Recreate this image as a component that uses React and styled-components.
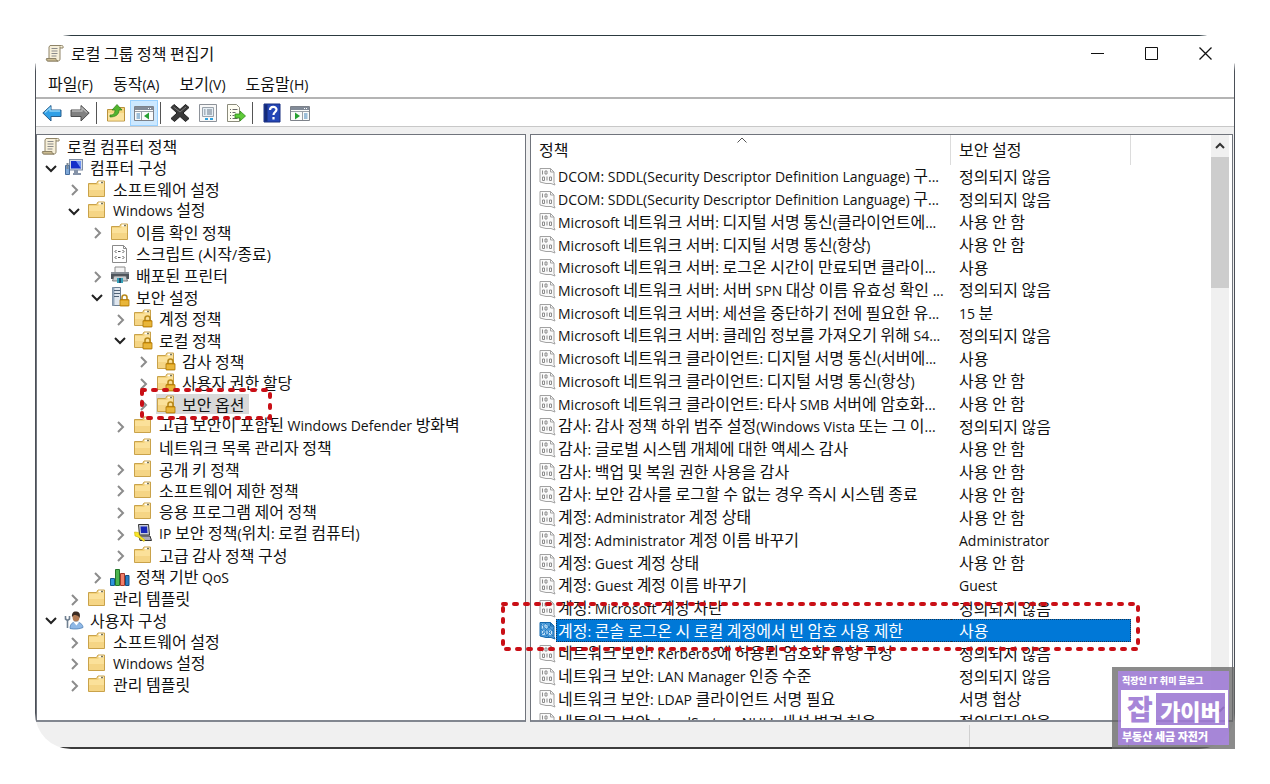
import React from "react";
import styled, { createGlobalStyle, css } from "styled-components";

const GlobalStyle = createGlobalStyle`
  * {
    box-sizing: border-box;
  }

  body {
    margin: 0;
    background: #fff;
    color: #111;
    font: 16px/20px "Noto Sans CJK KR", sans-serif;
  }

  button {
    border: 0;
    padding: 0;
    background: none;
    font: inherit;
    color: inherit;
  }
`;

const Page = styled.main`
  padding: 35px;
`;

const Stage = styled.div`
  position: relative;
`;

const Window = styled.div`
  border-radius: 36px;
  overflow: hidden;
`;

const Frame = styled.div`
  border: 1px solid #4a4f57;
  border-top-color: #2c3a40;
  border-bottom: 2px solid #3c3c3c;
  background: #fff;
`;

const Latin = styled.span`
  font-family: "Open Sans", "Noto Sans CJK KR", sans-serif;
  font-size: 14px;
`;

const TitleBar = styled.header`
  display: flex;
  align-items: center;
  height: 34px;
  padding: 0 2px 0 9px;

  h1 {
    flex: 1;
    margin: 0 0 0 6px;
    font-size: 16px;
    font-weight: 400;
  }
`;

const CaptionButton = styled.button`
  display: grid;
  place-items: center;
  width: 54px;
  height: 34px;
`;

const MenuBar = styled.nav`
  display: flex;
  align-items: center;
  gap: 20px;
  height: 27px;
  padding-left: 12px;
`;

const Toolbar = styled.div`
  display: flex;
  align-items: flex-end;
  height: 30px;
  padding-left: 2px;
  border-top: 2px solid #b4b4b4;
  border-bottom: 1px solid #c8c8c8;
`;

const ToolButton = styled.button`
  display: grid;
  place-items: center;
  width: 28px;
  height: 26px;
  border: 1px solid ${(p) => (p.$active ? "#99d1ff" : "transparent")};
  background: ${(p) => (p.$active ? "#cce8ff" : "none")};
`;

const ToolDivider = styled.span`
  width: 1px;
  height: 22px;
  margin: 0 ${(p) => p.$after}px 2px 2px;
  background: #555;
`;

const Workspace = styled.div`
  display: grid;
  grid-template-columns: 490px minmax(0, 1fr);
  gap: 4px;
  padding: 7px 1px 3px 0;
  background: #f0f0f0;
`;

const Pane = styled.section`
  height: 588px;
  border: 1px solid #70747c;
  border-bottom: 2px solid #828790;
  background: #fff;
  overflow: hidden;
`;

const Tree = styled.ul`
  display: flex;
  flex-direction: column;
  height: 560px;
  margin: 0;
  padding: 0 0 0 4px;
  list-style: none;
`;

const TreeRow = styled.li`
  display: flex;
  flex: 1;
  align-items: center;
  padding-left: ${(p) => Math.max(p.$depth - 1, 0) * 23}px;
  white-space: nowrap;
`;

const Toggle = styled.button`
  display: grid;
  place-items: center;
  width: 20px;
  height: 20px;
  padding-top: 3px;
  margin-right: 3px;
`;

const TreeItem = styled.span`
  display: flex;
  align-items: center;
  gap: 6px;
  padding-right: 5px;
  background: ${(p) => (p.$selected ? "#d9d9d9" : "none")};
`;

const ListPane = styled(Pane)`
  display: flex;
  justify-content: space-between;
`;

const PolicyTable = styled.table`
  width: 600px;
  height: 598px;
  border-spacing: 0;
  table-layout: fixed;
  white-space: nowrap;
`;

const HeadCell = styled.th`
  position: relative;
  height: 30px;
  padding: 0 0 2px 8px;
  border-right: 1px solid #dcdcdc;
  text-align: left;
  font-weight: 400;
`;

const SortMark = styled.svg`
  position: absolute;
  top: 2px;
  left: calc(50% - 4px);
`;

const Row = styled.tr`
  td {
    padding: 0 0 0 8px;
    border: 1px solid transparent;
    border-width: 1px 0;
    line-height: 19px;
  }

  td:first-child svg {
    display: block;
  }

  td:nth-child(2) {
    padding-left: 2px;
  }

  ${(p) =>
    p.$selected &&
    css`
      color: #fff;

      td:not(:first-child) {
        background: #0078d7;
        border-color: #17324d;
        border-style: dotted;
      }

      td:last-child {
        border-right-width: 1px;
      }

      td:nth-child(2) {
        border-left-width: 1px;
        padding-left: 1px;
      }
    `}
`;

const ScrollBar = styled.div`
  display: flex;
  flex-direction: column;
  align-items: center;
  width: 18px;
  margin-right: 3px;
  background: #f0f0f0;
`;

const ScrollButton = styled.button`
  display: grid;
  place-items: center;
  width: 18px;
  height: 22px;
`;

const Thumb = styled.div`
  width: 18px;
  height: 131px;
  margin-bottom: auto;
  background: #cdcdcd;
`;

const StatusBar = styled.footer`
  display: grid;
  grid-template-columns: minmax(0, 1fr) 159px 105px;
  height: 22px;
  background: #f0f0f0;

  span {
    border-right: 1px solid #d0d0d0;
  }
`;

const Callout = styled.svg`
  position: absolute;
  left: ${(p) => p.$left}px;
  top: ${(p) => p.$top}px;
  width: ${(p) => p.$width};
  height: ${(p) => p.$height}px;
  overflow: visible;
  pointer-events: none;

  rect {
    width: 100%;
    height: 100%;
    fill: none;
    stroke: #c90f16;
    stroke-width: 4;
    stroke-linecap: round;
    stroke-dasharray: 3 8;
  }
`;

const Badge = styled.aside`
  position: absolute;
  right: 0;
  bottom: 0;
  width: 123px;
  border: 6px solid rgba(100, 100, 100, 0.75);
  border-top-width: 4px;
  border-bottom-width: 4px;
  padding: 0 1px 0 3px;
  background: rgba(157, 122, 212, 0.9);
  background-clip: padding-box;
  color: #fff;
  font-weight: 900;

  p {
    margin: 0 0 0 1px;
    font-size: 9px;
    line-height: 17px;
    white-space: nowrap;
  }

  p:first-child {
    line-height: 19px;
  }

  p:last-child {
    font-size: 11px;
  }
`;

const BadgeName = styled.div`
  display: flex;
  height: 38px;
  border: 3px solid #fff;
  color: #a685d8;
  font-size: 28px;
  line-height: 30px;

  b {
    width: 32px;
    background: #fff;
    text-align: center;
    font-weight: 900;
  }

  strong {
    flex: 1;
    color: #fff;
    font-size: 22px;
    line-height: 34px;
    text-align: center;
    font-weight: 900;
  }
`;

// Hangul and Latin runs use different faces, so the text is split between them
const Label = ({ children }) =>
  children
    .split(/([\x21-\x7e]+(?: [\x21-\x7e]+)*)/)
    .map((part, i) => (i % 2 ? <Latin key={i}>{part}</Latin> : part));

const Svg = ({ size = 20, children }) => (
  <svg width={size} height={size} viewBox="0 0 20 20" fill="none" aria-hidden="true">
    {children}
  </svg>
);

const Lock = () => (
  <>
    <path d="M12 13v-2.500a2.500 2.500 0 0 1 5 0V13" stroke="#b98a1c" strokeWidth="1.600" />
    <rect x="10" y="12.500" width="9" height="6.500" rx="0.500" fill="#dfa21c" stroke="#a87508" strokeWidth="0.800" />
    <path d="M10.500 15h8M10.500 17h8" stroke="#f6d469" strokeWidth="0.800" />
  </>
);

const FolderShape = () => (
  <>
    <path d="M1.500 4.500h8l1.500-2.500h6.500v15.500h-16z" fill="#f3d27b" stroke="#c9a24a" />
    <path d="M11.500 3.500h5" stroke="#fff" strokeWidth="1.800" />
    <path d="M14 3.500h2" stroke="#77775f" strokeWidth="1.400" />
    <path d="M2 6h9l1-1h5v11.500H2z" fill="#fbe19a" />
    <path d="M2 11h15v6H2z" fill="#f5d585" />
  </>
);

const icons = {
  folder: <FolderShape />,
  locked: (
    <>
      <FolderShape />
      <Lock />
    </>
  ),
  scroll: (
    <>
      <path d="M5 2.500h11.500c1.500 0 2 1 1.500 2.500h-3v11c0 1.500-1 2-2 2H3c-1.500 0-2-1-1.500-2.500H4V4z" fill="#f6efd9" stroke="#8f8468" />
      <path d="M2 15.500h9c0 1.500.5 2.500 2 2.500H3.500C2 18 1.500 17 2 15.500z" fill="#cdbd92" stroke="#8f8468" />
      <path d="M6.500 5.500h6M6.500 8h6M6.500 10.500h6M6.500 13h5" stroke="#8b8b8b" />
      <path d="M15 5V3.500" stroke="#8f8468" />
    </>
  ),
  computer: (
    <>
      <rect x="5.500" y="2.500" width="13" height="10.500" fill="#d4dce8" stroke="#7e8ea5" />
      <path d="M7 4h10v7.500H7z" fill="#1530c9" />
      <path d="M12 4h5v7.500z" fill="#6f94f2" />
      <path d="M10 13h4v3h3v2H9v-2h1z" fill="#8593a8" />
      <path d="M1.500 8.500h4v9h-4z" fill="#7ea7d6" stroke="#456c9d" />
      <path d="M3.500 6v6" stroke="#7b8794" strokeWidth="2" />
    </>
  ),
  script: (
    <>
      <path d="M2.500 1.500h11l3 3v14h-14z" fill="#fff" stroke="#8a8a8a" />
      <path d="M13.500 1.500v3h3" stroke="#8a8a8a" />
      <path d="M6.500 6 5 7.500 6.500 9M8 7.500h2.500M12.500 6 14 7.500 12.500 9M6.500 12 5 13.500 6.500 15M8 13.500h2.500M12.500 12l1.500 1.500-1.500 1.500" stroke="#555" />
    </>
  ),
  printer: (
    <>
      <path d="M5 2h10v6H5z" fill="#f4f4f4" stroke="#8c8c8c" />
      <path d="M1 7h18v7H1z" fill="#4d545b" />
      <path d="M1 7h18v2H1z" fill="#878e95" />
      <path d="M4 11h12l1.500 5h-15z" fill="#c8cdd1" stroke="#666" strokeWidth="0.800" />
      <path d="M7 13h6v5H7z" fill="#33a0b8" />
      <path d="M9 13h2v5H9z" fill="#1f4e6b" />
    </>
  ),
  server: (
    <>
      <path d="M2.500.5h8v18h-8z" fill="#dfe6ee" stroke="#6d7f92" />
      <path d="M2.500.5h2v18h-2z" fill="#94a8bd" />
      <path d="M4 3.500h6M4 6.500h6M4 9.500h5" stroke="#4f6276" />
      <Lock />
    </>
  ),
  ipsec: (
    <>
      <path d="M5.500 1.500h10l1 10.500H6.500z" fill="#c8ccd8" stroke="#333" />
      <path d="M7.500 3.500h6.500l.5 6.500H8z" fill="#1727b8" />
      <path d="M6 13h11l1.500 4.500H7z" fill="#aab" stroke="#333" />
      <path d="m1.500 9 4 .5 1 3 5.500 4.500-1 1.500L5 14l-3-1z" fill="#fae62a" stroke="#c9b100" strokeWidth="0.600" />
    </>
  ),
  chart: (
    <>
      <path d="M.5 11.500h4v7h-4z" fill="#2e95dc" stroke="#135d92" />
      <path d="M5.500 2.500h4v16h-4z" fill="#4cb64f" stroke="#23752a" />
      <path d="M10.500 6.500h4v12h-4z" fill="#f0806a" stroke="#a3382b" />
      <path d="M15.500 8.500h3.500v10h-3.500z" fill="#2b7ec4" stroke="#134f82" />
    </>
  ),
  user: (
    <>
      <path d="M6 18.500c0-4 2-6.500 6-6.500s7 2.500 7 5.500c-3 1.500-9 2-13 1z" fill="#8fb8e6" stroke="#4f7fb5" strokeWidth="0.800" />
      <path d="m9.500 12 3 3.500L15 12z" fill="#fff" />
      <ellipse cx="12" cy="7" rx="3.500" ry="4.500" fill="#b37a52" />
      <path d="M8 7c-.5-4 1.500-6 4.500-5.500C16 2 16.500 5 15.500 8c-1-3-4-3-5.500-3z" fill="#3b2b22" />
      <path d="M1.500 6v3l2 1.500 2-1.500V6M3.500 10.500V18" stroke="#6f7f90" strokeWidth="1.600" />
    </>
  ),
};

const PolicyIcon = ({ selected }) => (
  <svg width="17" height="19" viewBox="0 0 17 19" fill="none" aria-hidden="true">
    <path
      d="M1 1.500h10.500l3.500 3.500v10.500l1 2.500-4-1.500H7L1 15z"
      fill={selected ? "#4b9ad8" : "#fafafa"}
      stroke={selected ? "#1668ac" : "#a2a2a2"}
    />
    <path d="M11.500 1.500V5H15" stroke={selected ? "#1668ac" : "#a2a2a2"} />
    <path
      d="M3.500 3.500v4M6 4h2v3H6zM3.500 10h2v3.500h-2zM8 9.500v4M10.500 10h2v3.500h-2z"
      stroke={selected ? "#cbe4f7" : "#8c8c8c"}
    />
    {selected && <path d="M2 3 14 15M2 8l8 8M6 2l9 9M2 14 13 3M7 15l8-8" stroke="#0f69b5" strokeDasharray="1 1" />}
  </svg>
);

const Console = ({ mirrored }) => (
  <Svg>
    <path d="M.5 3.500h19v14H.5z" fill="#fbfbfb" stroke="#7d828a" />
    <path d="M1 4h18v3H1z" fill="#828b98" />
    <path d="M14 5.500h1M16 5.500h1" stroke="#fff" />
    <path d={mirrored ? "M1 8.500h18M12.500 9v8" : "M1 8.500h18M7.500 9v8"} stroke="#9aa0a8" />
    <path d={mirrored ? "M14 11h3.500M14 13h3.500M14 15h3.500" : "M2.500 11H6M2.500 13H6M2.500 15H6"} stroke="#3f82b8" />
    <path d={mirrored ? "m5 9.500 5 3.500-5 3.500z" : "m15 9.500-5 3.500 5 3.500z"} fill="#27a032" />
  </Svg>
);

const Arrow = ({ fill, stroke, light, flip }) => (
  <Svg>
    <g transform={flip ? "matrix(-1 0 0 1 20 0)" : undefined}>
      <path d="M.800 10 9 2.500V7h10v6.500H9V18z" fill={fill} stroke={stroke} />
      <path d="M3 9.500 8 5v3h10" stroke={light} strokeWidth="1.400" />
    </g>
  </Svg>
);

// [depth, icon, text, state]
const tree = [
  [0, "scroll", "로컬 컴퓨터 정책"],
  [1, "computer", "컴퓨터 구성", "open"],
  [2, "folder", "소프트웨어 설정", "closed"],
  [2, "folder", "Windows 설정", "open"],
  [3, "folder", "이름 확인 정책", "closed"],
  [3, "script", "스크립트 (시작/종료)"],
  [3, "printer", "배포된 프린터", "closed"],
  [3, "server", "보안 설정", "open"],
  [4, "locked", "계정 정책", "closed"],
  [4, "locked", "로컬 정책", "open"],
  [5, "locked", "감사 정책", "closed"],
  [5, "locked", "사용자 권한 할당", "closed"],
  [5, "locked", "보안 옵션", "closed"],
  [4, "folder", "고급 보안이 포함된 Windows Defender 방화벽", "closed"],
  [4, "folder", "네트워크 목록 관리자 정책"],
  [4, "folder", "공개 키 정책", "closed"],
  [4, "folder", "소프트웨어 제한 정책", "closed"],
  [4, "folder", "응용 프로그램 제어 정책", "closed"],
  [4, "ipsec", "IP 보안 정책(위치: 로컬 컴퓨터)", "closed"],
  [4, "folder", "고급 감사 정책 구성", "closed"],
  [3, "chart", "정책 기반 QoS", "closed"],
  [2, "folder", "관리 템플릿", "closed"],
  [1, "user", "사용자 구성", "open"],
  [2, "folder", "소프트웨어 설정", "closed"],
  [2, "folder", "Windows 설정", "closed"],
  [2, "folder", "관리 템플릿", "closed"],
];

const policies = [
  ["DCOM: SDDL(Security Descriptor Definition Language) 구...", "정의되지 않음"],
  ["DCOM: SDDL(Security Descriptor Definition Language) 구...", "정의되지 않음"],
  ["Microsoft 네트워크 서버: 디지털 서명 통신(클라이언트에...", "사용 안 함"],
  ["Microsoft 네트워크 서버: 디지털 서명 통신(항상)", "사용 안 함"],
  ["Microsoft 네트워크 서버: 로그온 시간이 만료되면 클라이...", "사용"],
  ["Microsoft 네트워크 서버: 서버 SPN 대상 이름 유효성 확인 ...", "정의되지 않음"],
  ["Microsoft 네트워크 서버: 세션을 중단하기 전에 필요한 유...", "15 분"],
  ["Microsoft 네트워크 서버: 클레임 정보를 가져오기 위해 S4...", "정의되지 않음"],
  ["Microsoft 네트워크 클라이언트: 디지털 서명 통신(서버에...", "사용"],
  ["Microsoft 네트워크 클라이언트: 디지털 서명 통신(항상)", "사용 안 함"],
  ["Microsoft 네트워크 클라이언트: 타사 SMB 서버에 암호화...", "사용 안 함"],
  ["감사: 감사 정책 하위 범주 설정(Windows Vista 또는 그 이...", "정의되지 않음"],
  ["감사: 글로벌 시스템 개체에 대한 액세스 감사", "사용 안 함"],
  ["감사: 백업 및 복원 권한 사용을 감사", "사용 안 함"],
  ["감사: 보안 감사를 로그할 수 없는 경우 즉시 시스템 종료", "사용 안 함"],
  ["계정: Administrator 계정 상태", "사용 안 함"],
  ["계정: Administrator 계정 이름 바꾸기", "Administrator"],
  ["계정: Guest 계정 상태", "사용 안 함"],
  ["계정: Guest 계정 이름 바꾸기", "Guest"],
  ["계정: Microsoft 계정 차단", "정의되지 않음"],
  ["계정: 콘솔 로그온 시 로컬 계정에서 빈 암호 사용 제한", "사용"],
  ["네트워크 보안: Kerberos에 허용된 암호화 유형 구성", "정의되지 않음"],
  ["네트워크 보안: LAN Manager 인증 수준", "정의되지 않음"],
  ["네트워크 보안: LDAP 클라이언트 서명 필요", "서명 협상"],
  ["네트워크 보안: LocalSystem NULL 세션 변경 허용", "정의되지 않음"],
];

const chevrons = {
  open: <path d="m1 3 5 5 5-5" stroke="#222" strokeWidth="2" />,
  closed: <path d="m4 1 5 5-5 5" stroke="#8c8c8c" strokeWidth="2" />,
  up: <path d="m2 8 4-4 4 4" stroke="#333" strokeWidth="2" />,
  down: <path d="m2 4 4 4 4-4" stroke="#111" strokeWidth="2" />,
};

const Chevron = ({ type }) => (
  <svg width="12" height="12" viewBox="0 0 12 12" fill="none" aria-hidden="true">
    {chevrons[type]}
  </svg>
);

const ConsoleTree = () => (
  <Pane>
    <Tree>
      {tree.map(([depth, icon, text, state], i) => (
        <TreeRow key={i} $depth={depth}>
          {depth > 0 && (
            <Toggle aria-label={text}>{state && <Chevron type={state} />}</Toggle>
          )}
          <TreeItem $selected={text === "보안 옵션"}>
            <Svg>{icons[icon]}</Svg>
            <span>
              <Label>{text}</Label>
            </span>
          </TreeItem>
        </TreeRow>
      ))}
    </Tree>
  </Pane>
);

const PolicyList = () => (
  <ListPane>
    <PolicyTable>
      <colgroup>
        <col width="25" />
        <col width="395" />
        <col width="180" />
      </colgroup>
      <thead>
        <tr>
          <HeadCell colSpan="2">
            정책
            <SortMark width="10" height="6" viewBox="0 0 10 6" fill="none">
              <path d="m.5 5.500 4.500-4.500 4.500 4.500" stroke="#555" />
            </SortMark>
          </HeadCell>
          <HeadCell>보안 설정</HeadCell>
        </tr>
      </thead>
      <tbody>
        {policies.map(([name, value], i) => (
          <Row key={i} $selected={i === 20}>
            <td>
              <PolicyIcon selected={i === 20} />
            </td>
            <td>
              <Label>{name}</Label>
            </td>
            <td>
              <Label>{value}</Label>
            </td>
          </Row>
        ))}
      </tbody>
    </PolicyTable>
    <ScrollBar>
      <ScrollButton aria-label="위로">
        <Chevron type="up" />
      </ScrollButton>
      <Thumb />
      <ScrollButton aria-label="아래로">
        <Chevron type="down" />
      </ScrollButton>
    </ScrollBar>
  </ListPane>
);

const App = () => (
  <Page>
    <GlobalStyle />
    <Stage>
      <Window>
        <Frame>
          <TitleBar>
            <Svg>{icons.scroll}</Svg>
            <h1>로컬 그룹 정책 편집기</h1>
            <CaptionButton aria-label="최소화">
              <svg width="13" height="13" stroke="#111">
                <path d="M0 6.500h13" />
              </svg>
            </CaptionButton>
            <CaptionButton aria-label="최대화">
              <svg width="13" height="13" stroke="#111" fill="none">
                <path d="M.5.5h12v12H.5z" />
              </svg>
            </CaptionButton>
            <CaptionButton aria-label="닫기">
              <svg width="13" height="13" stroke="#111" strokeWidth="1.300">
                <path d="m.5.5 12 12M12.500.5l-12 12" />
              </svg>
            </CaptionButton>
          </TitleBar>
          <MenuBar>
            {["파일(F)", "동작(A)", "보기(V)", "도움말(H)"].map((item) => (
              <button key={item}>
                <Label>{item}</Label>
              </button>
            ))}
          </MenuBar>
          <Toolbar>
            <ToolButton aria-label="뒤로">
              <Arrow fill="#2f9fe6" stroke="#2a5f8c" light="#8fd3f8" />
            </ToolButton>
            <ToolButton aria-label="앞으로">
              <Arrow fill="#808080" stroke="#4d4d4d" light="#b5b5b5" flip />
            </ToolButton>
            <ToolDivider $after={5} />
            <ToolButton aria-label="한 수준 위로">
              <Svg>
                <path d="M1.500 6.500h8l1.500-2h7.500v13.500h-17z" fill="#f6d680" stroke="#b9923c" />
                <path d="M2 10h16v7.500H2z" fill="#fbe3a0" />
                <path d="M4 12c4 0 5-2 5-5H6l5-5.500L16 7h-3c0 5-4 7-9 7z" fill="#52b52e" stroke="#2f7d18" strokeWidth="0.700" />
              </Svg>
            </ToolButton>
            <ToolButton aria-label="콘솔 트리 표시" $active>
              <Console />
            </ToolButton>
            <ToolDivider $after={5} />
            <ToolButton aria-label="삭제">
              <Svg>
                <path d="M1 4.500 4 1.500l6 5 5.500-5 3.500 3-6 5.500 6 5.500-3.500 3L10 13.500l-5.500 5-3.500-3L7 10z" fill="#3a3a3a" stroke="#1f1f1f" />
                <path d="m3.500 4 6.500 5 6-5" stroke="#777" />
              </Svg>
            </ToolButton>
            <ToolButton aria-label="속성">
              <Svg>
                <path d="M1.500 1.500h17v17h-17z" fill="#f8f8f8" stroke="#8d9299" />
                <path d="M4.500 4.500h11v9h-11z" fill="#e6eef4" stroke="#9aa3ac" />
                <path d="M6 7h1.500M9 7h5M6 9h1.500M9 9h5M6 11h1.500M9 11h5" stroke="#6c7b89" />
                <path d="M7 16h3M12 16h3" stroke="#32a2dc" strokeWidth="2" />
              </Svg>
            </ToolButton>
            <ToolButton aria-label="목록 내보내기">
              <Svg>
                <path d="M1.500 1.500h9l3 3v14h-12z" fill="#fffef3" stroke="#8b8b7c" />
                <path d="M4 6.500h1M6.500 6.500h5M4 9.500h1M6.500 9.500h3M4 12.500h1M6.500 12.500h2M4 15.500h1M6.500 15.500h5" stroke="#6a6a6a" />
                <path d="M9 11h5V8l5.500 5-5.500 5v-3H9z" fill="#5ecb39" stroke="#31891b" strokeWidth="0.800" />
              </Svg>
            </ToolButton>
            <ToolDivider $after={5} />
            <ToolButton aria-label="도움말">
              <Svg>
                <path d="M2 1h16v18H2z" fill="#2446b6" stroke="#182f80" />
                <path d="M2.500 1.500h3v17h-3z" fill="#142a78" />
                <path d="M8 7c0-4 6.500-4 6.500-.5 0 2.500-3 2.500-3 5.500M11.500 14v2.500" stroke="#fff" strokeWidth="2.200" />
              </Svg>
            </ToolButton>
            <ToolButton aria-label="작업 창 표시">
              <Console mirrored />
            </ToolButton>
          </Toolbar>
          <Workspace>
            <ConsoleTree />
            <PolicyList />
          </Workspace>
          <StatusBar>
            <span />
            <span />
          </StatusBar>
        </Frame>
      </Window>
      <Callout $left={107} $top={355} $width="128px" $height={28}>
        <rect />
      </Callout>
      <Callout $left={468} $top={569} $width="calc(100% - 565px)" $height={45}>
        <rect />
      </Callout>
      <Badge>
        <p>직장인 IT 취미 블로그</p>
        <BadgeName>
          <b>잡</b>
          <strong>가이버</strong>
        </BadgeName>
        <p>부동산 세금 자전거</p>
      </Badge>
    </Stage>
  </Page>
);

export default App;
